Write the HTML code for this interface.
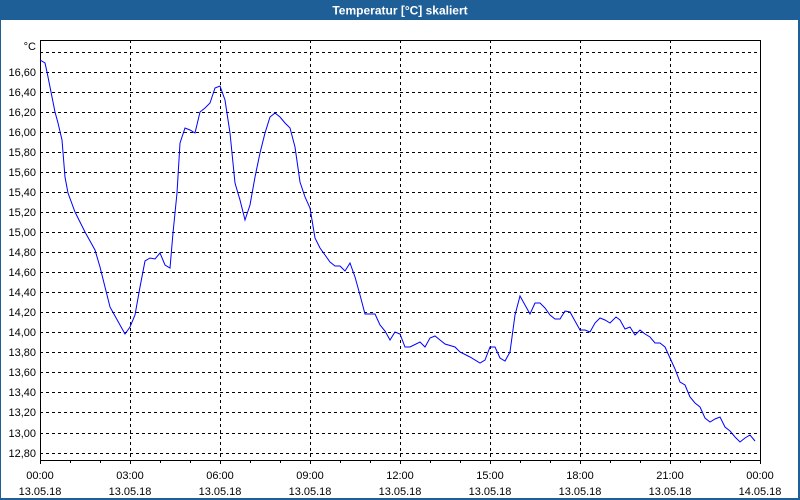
<!DOCTYPE html>
<html><head><meta charset="utf-8"><style>
html,body{margin:0;padding:0;width:800px;height:500px;overflow:hidden;background:#fff}
</style></head><body>
<svg width="800" height="500" xmlns="http://www.w3.org/2000/svg" font-family="Liberation Sans, Tahoma, sans-serif">
<rect x="0" y="0" width="800" height="500" fill="#1f5f98"/>
<rect x="1" y="20" width="797" height="478" fill="#fff"/>
<text x="400" y="14.5" text-anchor="middle" fill="#fff" font-size="12" font-weight="bold">Temperatur [°C] skaliert</text>
<g stroke="#000" stroke-width="1" stroke-dasharray="3,3" shape-rendering="crispEdges" fill="none">
<path d="M40 52.5H760M40 72.5H760M40 92.5H760M40 112.5H760M40 132.5H760M40 152.5H760M40 172.5H760M40 192.5H760M40 212.5H760M40 232.5H760M40 252.5H760M40 272.5H760M40 292.5H760M40 312.5H760M40 332.5H760M40 352.5H760M40 372.5H760M40 392.5H760M40 412.5H760M40 433.5H760M40 453.5H760"/>
<path d="M130.5 40V460M220.5 40V460M310.5 40V460M400.5 40V460M490.5 40V460M580.5 40V460M670.5 40V460"/>
</g>
<g stroke="#000" stroke-width="1" shape-rendering="crispEdges" fill="none">
<rect x="40.5" y="40.5" width="720" height="420"/>
<path d="M40.5 460V464M70.5 460V463M100.5 460V463M130.5 460V464M160.5 460V463M190.5 460V463M220.5 460V464M250.5 460V463M280.5 460V463M310.5 460V464M340.5 460V463M370.5 460V463M400.5 460V464M430.5 460V463M460.5 460V463M490.5 460V464M520.5 460V463M550.5 460V463M580.5 460V464M610.5 460V463M640.5 460V463M670.5 460V464M700.5 460V463M730.5 460V463M760.5 460V464"/>
</g>
<g font-size="11" fill="#000" text-anchor="end">
<text x="36" y="50">°C</text>
<text x="36" y="76">16,60</text><text x="36" y="96">16,40</text><text x="36" y="116">16,20</text><text x="36" y="136">16,00</text><text x="36" y="156">15,80</text><text x="36" y="176">15,60</text><text x="36" y="196">15,40</text><text x="36" y="216">15,20</text><text x="36" y="236">15,00</text><text x="36" y="256">14,80</text><text x="36" y="276">14,60</text><text x="36" y="296">14,40</text><text x="36" y="316">14,20</text><text x="36" y="336">14,00</text><text x="36" y="356">13,80</text><text x="36" y="376">13,60</text><text x="36" y="396">13,40</text><text x="36" y="416">13,20</text><text x="36" y="437">13,00</text><text x="36" y="457">12,80</text>
</g>
<g font-size="11" fill="#000" text-anchor="middle">
<text x="40" y="479">00:00</text><text x="40" y="495">13.05.18</text>
<text x="130" y="479">03:00</text><text x="130" y="495">13.05.18</text>
<text x="220" y="479">06:00</text><text x="220" y="495">13.05.18</text>
<text x="310" y="479">09:00</text><text x="310" y="495">13.05.18</text>
<text x="400" y="479">12:00</text><text x="400" y="495">13.05.18</text>
<text x="490" y="479">15:00</text><text x="490" y="495">13.05.18</text>
<text x="580" y="479">18:00</text><text x="580" y="495">13.05.18</text>
<text x="670" y="479">21:00</text><text x="670" y="495">13.05.18</text>
<text x="760" y="479">00:00</text><text x="760" y="495">14.05.18</text>
</g>
<polyline fill="none" stroke="#0000ff" stroke-width="1" points="40,60 45,63 47,72 55,112 58,123 62,140 65,177 68,193 75,212 85,232 95,250 100,267 105,287 110,307 120,325 125,334 130,327 135,315 140,287 145,261 150,258 155,259 160,253 165,265 170,268 173,233 177,193 180,143 185,128 190,130 195,133 200,112 205,108 210,103 215,88 220,86 225,100 230,133 235,183 240,200 245,220 250,205 255,177 260,153 265,133 270,117 275,113 280,117 285,123 290,128 295,147 300,182 305,197 310,208 315,238 320,248 325,255 330,262 335,266 340,266 345,271 350,263 355,277 360,295 365,314 375,314 380,325 385,331 390,340 395,332 400,334 405,347 410,347 420,342 425,347 430,338 435,336 440,340 445,344 455,347 460,352 470,357 480,363 485,360 490,347 495,347 500,358 505,361 510,352 515,315 520,296 525,305 530,314 535,303 540,303 545,308 550,315 555,319 560,319 565,311 570,312 575,321 580,330 585,330 590,332 595,323 600,318 605,320 610,323 616,317 620,320 625,329 630,327 635,335 640,330 645,334 650,337 655,343 660,343 665,347 670,358 675,369 680,382 685,385 690,397 695,403 700,407 705,418 710,422 715,419 720,417 725,427 730,431 735,437 740,442 745,438 750,435 755,441"/>
</svg>
</body></html>
